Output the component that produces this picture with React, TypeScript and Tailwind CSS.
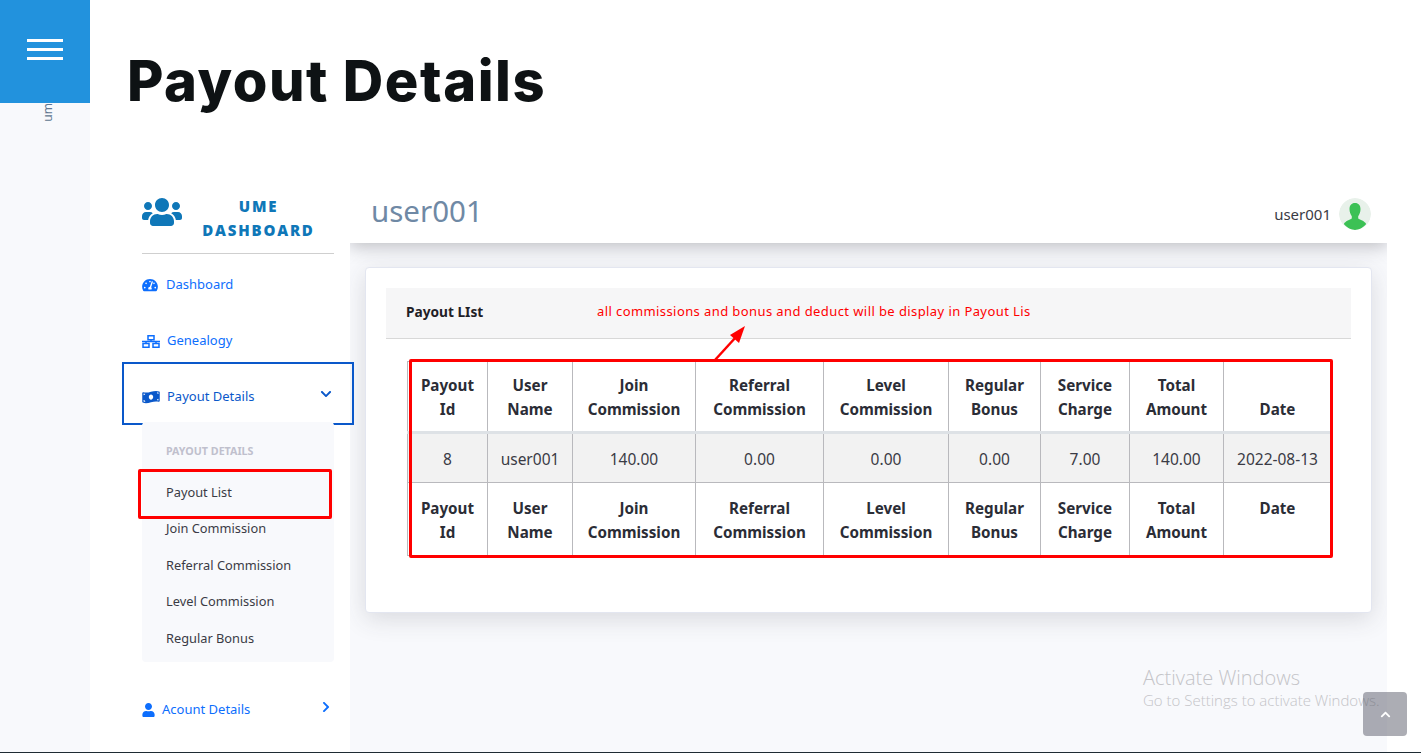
import { FaUsers, FaTachometerAlt, FaMoneyBillWave, FaUser, FaChevronDown, FaChevronRight, FaChevronUp } from 'react-icons/fa';

const columns = [
  { label: ['Payout', 'Id'], value: '8', width: 'w-[80px]' },
  { label: ['User', 'Name'], value: 'user001', width: 'w-[85px]' },
  { label: ['Join', 'Commission'], value: '140.00', width: 'w-[123px]' },
  { label: ['Referral', 'Commission'], value: '0.00', width: 'w-[128px]' },
  { label: ['Level', 'Commission'], value: '0.00', width: 'w-[125px]' },
  { label: ['Regular', 'Bonus'], value: '0.00', width: 'w-[92px]' },
  { label: ['Service', 'Charge'], value: '7.00', width: 'w-[89px]' },
  { label: ['Total', 'Amount'], value: '140.00', width: 'w-[94px]' },
  { label: ['Date'], value: '2022-08-13', width: 'w-[108px]' },
];

const subItems = ['Join Commission', 'Referral Commission', 'Level Commission', 'Regular Bonus'];

function HeadCell({ label, align }: { label: string[]; align: string }) {
  return (
    <th className={`border border-[#b9b9bd] px-1 text-center text-[15.2px] leading-6 font-bold text-[#2b2d36] ${align}`}>
      {label.map((l) => (
        <div key={l}>{l}</div>
      ))}
    </th>
  );
}

function PayoutTable() {
  return (
    <div className="relative mt-[22px] ml-[21px] w-[925px]">
      <table className="w-[925px] table-fixed border-collapse">
        <colgroup>
          {columns.map((c) => (
            <col key={c.label[0]} className={c.width} />
          ))}
        </colgroup>
        <thead>
          <tr className="h-[71px] border-b-[3px] border-[#dee2e6]">
            {columns.map((c) => (
              <HeadCell key={c.label[0]} label={c.label} align="align-bottom pb-[10px]" />
            ))}
          </tr>
        </thead>
        <tbody>
          <tr className="h-[50px] bg-[#f2f2f2]">
            {columns.map((c) => (
              <td key={c.label[0]} className="border border-[#b9b9bd] pt-[4px] text-center text-[15.5px] text-[#3a3b45]">
                {c.value}
              </td>
            ))}
          </tr>
        </tbody>
        <tfoot>
          <tr className="h-[73px]">
            {columns.map((c) => (
              <HeadCell key={c.label[0]} label={c.label} align="align-top pt-[13px]" />
            ))}
          </tr>
        </tfoot>
      </table>
      <div className="absolute top-[-2px] left-[1.5px] h-[199px] w-[924.5px] rounded-[2px] border-[3px] border-[#ff0000]" />
    </div>
  );
}

function Avatar() {
  return (
    <svg viewBox="0 0 32 32" className="h-8 w-8 rounded-full">
      <circle cx="16" cy="16" r="16" fill="#e8f1ea" />
      <path
        d="M16 5c3.600 0 5.500 2.500 5.500 6 0 3-1 5.500-2.300 7.200v2.300c2 1.500 6 2 8 5.500A16 16 0 0 1 16 32 16 16 0 0 1 4.800 26c2-3.500 6-4 8-5.500v-2.300C11.500 16.500 10.500 14 10.500 11c0-3.500 1.900-6 5.500-6z"
        fill="#3cc155"
      />
    </svg>
  );
}

function GenealogyIcon() {
  return (
    <svg viewBox="0 0 18 13" className="h-[13px] w-[18px]" fill="none" stroke="#0d6efd" strokeWidth="1.5">
      <rect x="6" y="0.75" width="6" height="4" />
      <path d="M9 5v1.500M0 6.500h18M4 6.500v2M14 6.500v2" />
      <rect x="1" y="8.500" width="6" height="3.750" />
      <rect x="11" y="8.500" width="6" height="3.750" />
    </svg>
  );
}

function NavItem({ icon, label, gap }: { icon: React.ReactNode; label: string; gap: string }) {
  return (
    <div className={`flex h-14 items-center text-[13px] text-[#0d6efd] ${gap}`}>
      {icon}
      <span>{label}</span>
    </div>
  );
}

function Sidebar() {
  return (
    <aside className="w-[260px] shrink-0 bg-white pr-4 pl-[52px] font-['Noto_Sans',sans-serif]">
      <div className="flex h-[69px] items-start border-b border-[#cfcfcf] pt-[11px]">
        <FaUsers className="h-[32px] w-[40px] text-[#0f77b8]" />
        <div className="-mt-[1px] ml-[19px] w-[115px] text-center font-['Open_Sans',sans-serif] text-[15px] leading-[23.5px] font-extrabold tracking-[1.8px] whitespace-nowrap text-[#0f77b8]">
          <div>UME</div>
          <div>DASHBOARD</div>
        </div>
      </div>
      <div className="h-[3px]" />
      <NavItem icon={<FaTachometerAlt className="h-[14px] w-4 text-[#0d6efd]" />} label="Dashboard" gap="gap-2" />
      <NavItem icon={<GenealogyIcon />} label="Genealogy" gap="gap-[7px]" />
      <div className="relative -mx-5 -mt-[7px] flex h-[63px] items-center gap-[7px] border-2 border-[#0a58ca] px-[18px] pt-[7px] text-[13px] text-[#0a58ca]">
        <FaMoneyBillWave className="h-[14px] w-[18px]" />
        <span>Payout Details</span>
        <FaChevronDown className="absolute top-[24px] right-[20px] h-[12px] w-[12px]" />
      </div>
      <div className="relative -mt-[3px] h-[240px] rounded-[4px] bg-[#f8f9fc] pt-[6px] text-[12.8px] text-[#3a3b45]">
        <div className="flex h-[46px] items-center pl-6 text-[10.7px] font-bold text-[#c0c0cd]">PAYOUT DETAILS</div>
        <div className="relative flex h-[36.5px] items-center pl-6">
          Payout List
          <div className="absolute top-[-5px] -left-1 h-[50px] w-[194px] rounded-[2px] border-[3px] border-[#ff0000]" />
        </div>
        {subItems.map((s) => (
          <div key={s} className="flex h-[36.5px] items-center pl-6">
            {s}
          </div>
        ))}
      </div>
      <div className="relative mt-[20px] flex h-14 items-center gap-[7px] text-[13px] text-[#0d6efd]">
        <FaUser className="h-[14px] w-[13px]" />
        <span>Acount Details</span>
        <FaChevronRight className="absolute top-[19px] right-[2px] h-[12px] w-[12px]" />
      </div>
    </aside>
  );
}

function Content() {
  return (
    <section className="w-[1037px] shrink-0 overflow-hidden bg-[#f8f9fc] font-['Noto_Sans',sans-serif]">
      <header className="flex h-[58px] items-center justify-between bg-white pr-4 pl-[21px] shadow-[0_4px_16px_rgba(58,59,69,0.3)]">
        <h2 className="-mt-[6px] text-[29.500px] font-normal text-[#6f89a5]">user001</h2>
        <div className="flex items-center gap-2 text-[15px] text-[#3a3b45]">
          <span>user001</span>
          <Avatar />
        </div>
      </header>
      <div className="mx-[15px] mt-[24px] h-[346px] rounded-[4px] border border-[#e3e6f0] bg-white p-5 shadow-[0_6px_24px_rgba(58,59,69,0.16)]">
        <div className="relative flex h-[51px] items-center border-b border-[#d8d8d8] bg-[#f6f6f7] pb-[2px] pl-5">
          <span className="text-[13.7px] font-bold text-[#1f2026]">Payout LIst</span>
          <span className="absolute top-[14px] left-[211px] text-[13px] tracking-[0.41px] text-[#ff0000]">
            all commissions and bonus and deduct will be display in Payout Lis
          </span>
        </div>
        <PayoutTable />
      </div>
    </section>
  );
}

export default function App() {
  return (
    <div className="relative flex h-[753px] w-[1421px] overflow-hidden bg-white">
      <div className="relative w-[90px] shrink-0 bg-[#f8f9fc]">
        <div className="flex h-[103px] flex-col items-center justify-center gap-[6px] bg-[#2292dd] pb-[4px]">
          <span className="h-[3px] w-[36px] bg-white" />
          <span className="h-[3px] w-[36px] bg-white" />
          <span className="h-[3px] w-[36px] bg-white" />
        </div>
        <div className="absolute top-[103px] left-[42px] rotate-180 font-['Noto_Sans',sans-serif] text-[12px] leading-[12px] text-[#5f7690] [writing-mode:vertical-rl]">
          um
        </div>
      </div>
      <div className="flex min-w-0 flex-1 flex-col">
        <div className="h-[185px] pt-[41px] pl-[37px]">
          <h1 className="font-['Inter',sans-serif] text-[56px] leading-[80px] font-extrabold tracking-[1.55px] text-[#0e1214]">Payout Details</h1>
        </div>
        <div className="flex flex-1">
          <Sidebar />
          <Content />
        </div>
      </div>

      <svg viewBox="0 0 40 44" className="absolute top-[322px] left-[712px] h-[44px] w-[40px]">
        <path d="M3 38 L24 15" stroke="#ff0000" strokeWidth="2.5" fill="none" />
        <path d="M33 4 L18 13 L27 21 Z" fill="#ff0000" />
      </svg>

      <div className="absolute top-[666px] left-[1143px] font-['Open_Sans',sans-serif] font-light text-[#c4c4c8]">
        <div className="text-[20px] leading-6">Activate Windows</div>
        <div className="text-[15px] leading-5 whitespace-nowrap">Go to Settings to activate Windows.</div>
      </div>
      <div className="absolute top-[692px] left-[1363px] flex h-[44px] w-[44px] items-center justify-center rounded-[4px] bg-[rgba(90,92,105,0.5)] text-white">
        <FaChevronUp className="h-[11px] w-[11px]" />
      </div>
      <div className="absolute right-0 bottom-0 left-0 h-[1.5px] bg-[#1e2b33]" />
    </div>
  );
}
